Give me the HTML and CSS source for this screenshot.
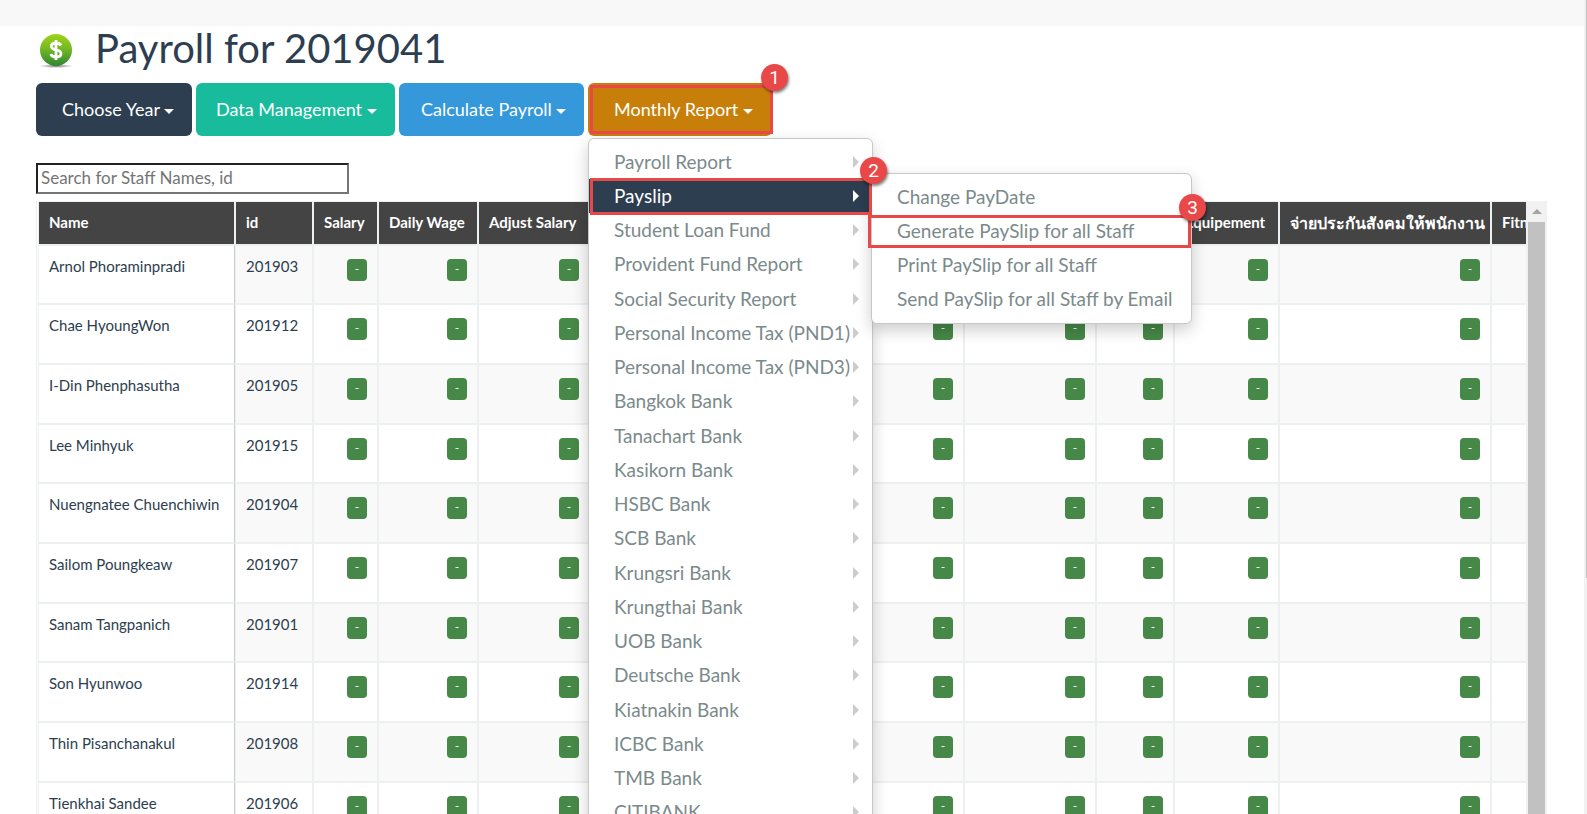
FILE: index.html
```
<!DOCTYPE html>
<html lang="en">
<head>
    <meta charset="UTF-8">
    <meta name="viewport" content="width=device-width, initial-scale=1.0">
    <title>Payroll</title>
    <link rel="stylesheet" href="styles.css">
</head>
<body>
<div class="topbar"></div>

<main class="page">
    <div class="title-row">
        <svg class="title-icon" width="34" height="36" viewBox="0 0 34 36" aria-hidden="true">
            <defs>
                <linearGradient id="coin" x1="0" y1="0" x2="0" y2="1">
                    <stop offset="0" stop-color="#a0d418"/>
                    <stop offset="0.5" stop-color="#6fb524"/>
                    <stop offset="1" stop-color="#2f8533"/>
                </linearGradient>
                <radialGradient id="shade">
                    <stop offset="0" stop-color="#555" stop-opacity="0.8"/>
                    <stop offset="1" stop-color="#555" stop-opacity="0"/>
                </radialGradient>
            </defs>
            <ellipse cx="17" cy="33" rx="17" ry="2" fill="url(#shade)"/>
            <circle cx="17" cy="17" r="16" fill="url(#coin)"/>
            <path d="M22 12.5C21 10.5 19.500 10 17 10C14 10 12.300 11.300 12.300 13.400C12.300 18 22 15.500 22 20.500C22 22.800 20 24 17 24C14.300 24 12.500 23 11.800 21M17 7V27" fill="none" stroke="#fff" stroke-width="2.800"/>
        </svg>
        <h1>Payroll for 2019041</h1>
    </div>

    <div class="toolbar">
        <button type="button" class="btn btn-dark">Choose Year <span class="caret"></span></button>
        <button type="button" class="btn btn-green">Data Management <span class="caret"></span></button>
        <button type="button" class="btn btn-blue">Calculate Payroll <span class="caret"></span></button>
        <div class="dropdown">
            <button type="button" class="btn btn-orange">Monthly Report <span class="caret"></span></button>
            <div class="mark mark-button"><span class="step">1</span></div>

            <ul class="menu">
                <li><a href="#">Payroll Report</a></li>
                <li class="active">
                    <a href="#">Payslip</a>
                    <ul class="menu submenu">
                        <li><a href="#">Change PayDate</a></li>
                        <li>
                            <a href="#">Generate PaySlip for all Staff</a>
                            <div class="mark mark-generate"><span class="step">3</span></div>
                        </li>
                        <li><a href="#">Print PaySlip for all Staff</a></li>
                        <li><a href="#">Send PaySlip for all Staff by Email</a></li>
                    </ul>
                    <div class="mark mark-payslip"><span class="step">2</span></div>
                </li>
                <li><a href="#">Student Loan Fund</a></li>
                <li><a href="#">Provident Fund Report</a></li>
                <li><a href="#">Social Security Report</a></li>
                <li><a href="#">Personal Income Tax (PND1)</a></li>
                <li><a href="#">Personal Income Tax (PND3)</a></li>
                <li><a href="#">Bangkok Bank</a></li>
                <li><a href="#">Tanachart Bank</a></li>
                <li><a href="#">Kasikorn Bank</a></li>
                <li><a href="#">HSBC Bank</a></li>
                <li><a href="#">SCB Bank</a></li>
                <li><a href="#">Krungsri Bank</a></li>
                <li><a href="#">Krungthai Bank</a></li>
                <li><a href="#">UOB Bank</a></li>
                <li><a href="#">Deutsche Bank</a></li>
                <li><a href="#">Kiatnakin Bank</a></li>
                <li><a href="#">ICBC Bank</a></li>
                <li><a href="#">TMB Bank</a></li>
                <li><a href="#">CITIBANK</a></li>
            </ul>
        </div>
    </div>

    <input type="text" class="search" id="search" placeholder="Search for Staff Names, id" aria-label="Search for Staff Names, id">

    <div class="grid">
        <div class="grid-body">
            <table>
                <colgroup>
                    <col class="col-name">
                    <col class="col-id">
                    <col class="col-salary">
                    <col class="col-wage">
                    <col class="col-adjust">
                    <col class="col-overtime">
                    <col class="col-bonus">
                    <col class="col-allowance">
                    <col class="col-transport">
                    <col class="col-meal">
                    <col class="col-equipment">
                    <col class="col-social">
                    <col class="col-fitness">
                </colgroup>
                <thead>
                    <tr>
                        <th>Name</th>
                        <th>id</th>
                        <th>Salary</th>
                        <th>Daily Wage</th>
                        <th>Adjust Salary</th>
                        <th></th>
                        <th></th>
                        <th></th>
                        <th></th>
                        <th></th>
                        <th>Equipement</th>
                        <th lang="th">จ่ายประกันสังคมให้พนักงาน</th>
                        <th>Fitness</th>
                    </tr>
                </thead>
                <tbody id="staff-list"></tbody>
            </table>
        </div>
        <div class="scroll">
            <div class="scroll-up"></div>
            <div class="scroll-thumb"></div>
        </div>
    </div>
</main>

<div class="page-scroll"><div class="page-thumb"></div></div>

<script>
    const staff = [
        { id: '201903', name: 'Arnol Phoraminpradi' },
        { id: '201912', name: 'Chae HyoungWon' },
        { id: '201905', name: 'I-Din Phenphasutha' },
        { id: '201915', name: 'Lee Minhyuk' },
        { id: '201904', name: 'Nuengnatee Chuenchiwin' },
        { id: '201907', name: 'Sailom Poungkeaw' },
        { id: '201901', name: 'Sanam Tangpanich' },
        { id: '201914', name: 'Son Hyunwoo' },
        { id: '201908', name: 'Thin Pisanchanakul' },
        { id: '201906', name: 'Tienkhai Sandee' }
    ];
    const amountColumns = 11;

    // Fill the staff table
    const staffList = document.getElementById('staff-list');
    staff.forEach(person => {
        const tr = document.createElement('tr');
        tr.innerHTML = `<td class="name">${person.name}</td><td>${person.id}</td>`
            + '<td class="amount"><span class="label">-</span></td>'.repeat(amountColumns);
        staffList.appendChild(tr);
    });

    // Filter rows by name or id
    document.getElementById('search').addEventListener('input', (e) => {
        const query = e.target.value.toLowerCase();
        staff.forEach((person, i) => {
            const match = (person.name + ' ' + person.id).toLowerCase().includes(query);
            staffList.rows[i].hidden = !match;
        });
    });
</script>
</body>
</html>
```
FILE: styles.css
```
* {
    box-sizing: border-box;
}

body {
    margin: 0;
    height: 100vh;
    overflow: hidden;
    display: flex;
    flex-direction: column;
    font-family: Lato, "Noto Sans", sans-serif;
    font-size: 15px;
    line-height: 21px;
    color: #2c3e50;
    background-color: #fff;
}

.topbar {
    flex: none;
    height: 26px;
    background-color: #f8f8f8;
}

.page {
    flex: 1;
    min-height: 0;
    display: flex;
    flex-direction: column;
    padding: 0 40px 0 36px;
}

/* Title */
.title-row {
    display: flex;
    align-items: center;
    gap: 22px;
    height: 57px;
    padding: 0 0 8px 3px;
}

h1 {
    margin: 0;
    padding-bottom: 5px;
    font-size: 40px;
    font-weight: 400;
    line-height: 44px;
}

/* Buttons */
.toolbar {
    display: flex;
    gap: 4px;
    margin-bottom: 27px;
}

.btn {
    height: 53px;
    padding: 0 0 0 24px;
    border: 0;
    border-radius: 6px;
    font-family: inherit;
    font-size: 18px;
    line-height: 27px;
    text-align: left;
    white-space: nowrap;
    color: #fff;
    cursor: pointer;
}

.btn-dark {
    width: 156px;
    padding-left: 26px;
    background-color: #2c3e50;
}

.btn-green {
    width: 199px;
    padding-left: 20px;
    background-color: #18bc9c;
}

.btn-blue {
    width: 185px;
    padding-left: 22px;
    background-color: #3498db;
}

.btn-orange {
    width: 184px;
    padding-left: 26px;
    background-color: #c87f0a;
}

.caret {
    display: inline-block;
    vertical-align: middle;
    border-top: 5px solid #fff;
    border-left: 5px solid transparent;
    border-right: 5px solid transparent;
}

/* Menus */
.dropdown,
.menu li {
    position: relative;
}

.menu {
    position: absolute;
    z-index: 10;
    top: 55px;
    left: 0;
    width: 285px;
    margin: 0;
    padding: 6px 0;
    list-style: none;
    background-color: #fff;
    border: 1px solid #c8c8c8;
    border-radius: 6px;
    box-shadow: 0 6px 16px rgba(0, 0, 0, 0.2);
}

.menu li:nth-child(4n) {
    padding-bottom: 1px;
}

.menu a {
    display: flex;
    align-items: center;
    justify-content: space-between;
    padding: 0 13px 0 25px;
    font-size: 19px;
    line-height: 34px;
    color: #7b8a8b;
    text-decoration: none;
    white-space: nowrap;
}

.menu a::after {
    content: "";
    border-left: 6px solid #ccc;
    border-top: 6px solid transparent;
    border-bottom: 6px solid transparent;
}

.menu .active > a {
    color: #fff;
    background-color: #2c3e50;
}

.menu .active > a::after {
    border-left-color: #fff;
}

.menu .submenu {
    top: -6px;
    left: 282px;
    width: 321px;
}

.menu .submenu a::after {
    display: none;
}

/* Step marks */
.mark {
    position: absolute;
    z-index: 20;
    border: 3px solid #e94848;
    pointer-events: none;
}

.mark-button {
    inset: 2px -1px 2px 2px;
}

.mark-payslip {
    inset: -1px 0 -2px 1px;
}

.mark-generate {
    inset: 1px 0 0 -4px;
}

.step {
    position: absolute;
    top: -24px;
    right: -18px;
    width: 27px;
    height: 27px;
    border-radius: 50%;
    font-family: Roboto, sans-serif;
    font-size: 19px;
    line-height: 27px;
    text-align: center;
    color: #fff;
    background-color: #e94848;
    box-shadow: 1px 2px 3px rgba(0, 0, 0, 0.5);
}

/* Search */
.search {
    flex: none;
    width: 313px;
    height: 31px;
    margin-bottom: 7px;
    padding: 0 3px 3px;
    border: 2px solid;
    border-color: #222 #767676 #767676 #222;
    font-family: inherit;
    font-size: 17px;
    color: #2c3e50;
}

.search::placeholder {
    color: #757575;
}

/* Staff table */
.grid {
    flex: 1;
    min-height: 0;
    display: flex;
}

.grid-body {
    flex: 1;
    min-width: 0;
    overflow: hidden;
    padding-left: 1px;
    border-left: 1px solid #ecf0f1;
}

table {
    width: 1562px;
    table-layout: fixed;
    border-collapse: separate;
    border-spacing: 0;
}

.col-name { width: 197px; }
.col-id { width: 78px; }
.col-salary { width: 65px; }
.col-wage { width: 100px; }
.col-adjust { width: 112px; }
.col-overtime { width: 110px; }
.col-bonus { width: 100px; }
.col-allowance { width: 164px; }
.col-transport { width: 132px; }
.col-meal { width: 78px; }
.col-equipment { width: 105px; }
.col-social { width: 212px; }
.col-fitness { width: 109px; }

th,
td {
    padding: 10px;
    border: 1px solid #ecf0f1;
    text-align: left;
    vertical-align: top;
    white-space: nowrap;
}

th {
    height: 44px;
    color: #fff;
    background-color: #444;
}

th:lang(th) {
    font-size: 16px;
}

td {
    height: 60px;
}

tr:nth-child(3n + 1) td {
    height: 59px;
}

tr:nth-child(odd) td {
    background-color: #f9f9f9;
}

tr td.name {
    background-color: #fff;
    border-right-color: #ccc;
}

td.amount {
    padding-top: 11px;
    text-align: right;
}

.label {
    display: inline-block;
    width: 20px;
    height: 22px;
    border-radius: 4px;
    font-size: 12px;
    line-height: 20px;
    text-align: center;
    color: #fff;
    background-color: #468847;
}

/* Scroll bars */
.scroll {
    flex: none;
    display: flex;
    flex-direction: column;
    width: 21px;
    padding: 0 2px;
    background-color: #f1f1f1;
}

.scroll-up {
    display: flex;
    align-items: center;
    justify-content: center;
    height: 21px;
}

.scroll-up::before {
    content: "";
    border-bottom: 5px solid #a3a3a3;
    border-left: 5px solid transparent;
    border-right: 5px solid transparent;
}

.scroll-thumb {
    flex: 1;
    background-color: #c1c1c1;
}

.page-scroll {
    position: fixed;
    top: 0;
    right: 0;
    bottom: 0;
    width: 3px;
    padding-left: 2px;
    background-color: #f1f1f1;
}

.page-thumb {
    height: 71%;
    background-color: #c1c1c1;
}
```
